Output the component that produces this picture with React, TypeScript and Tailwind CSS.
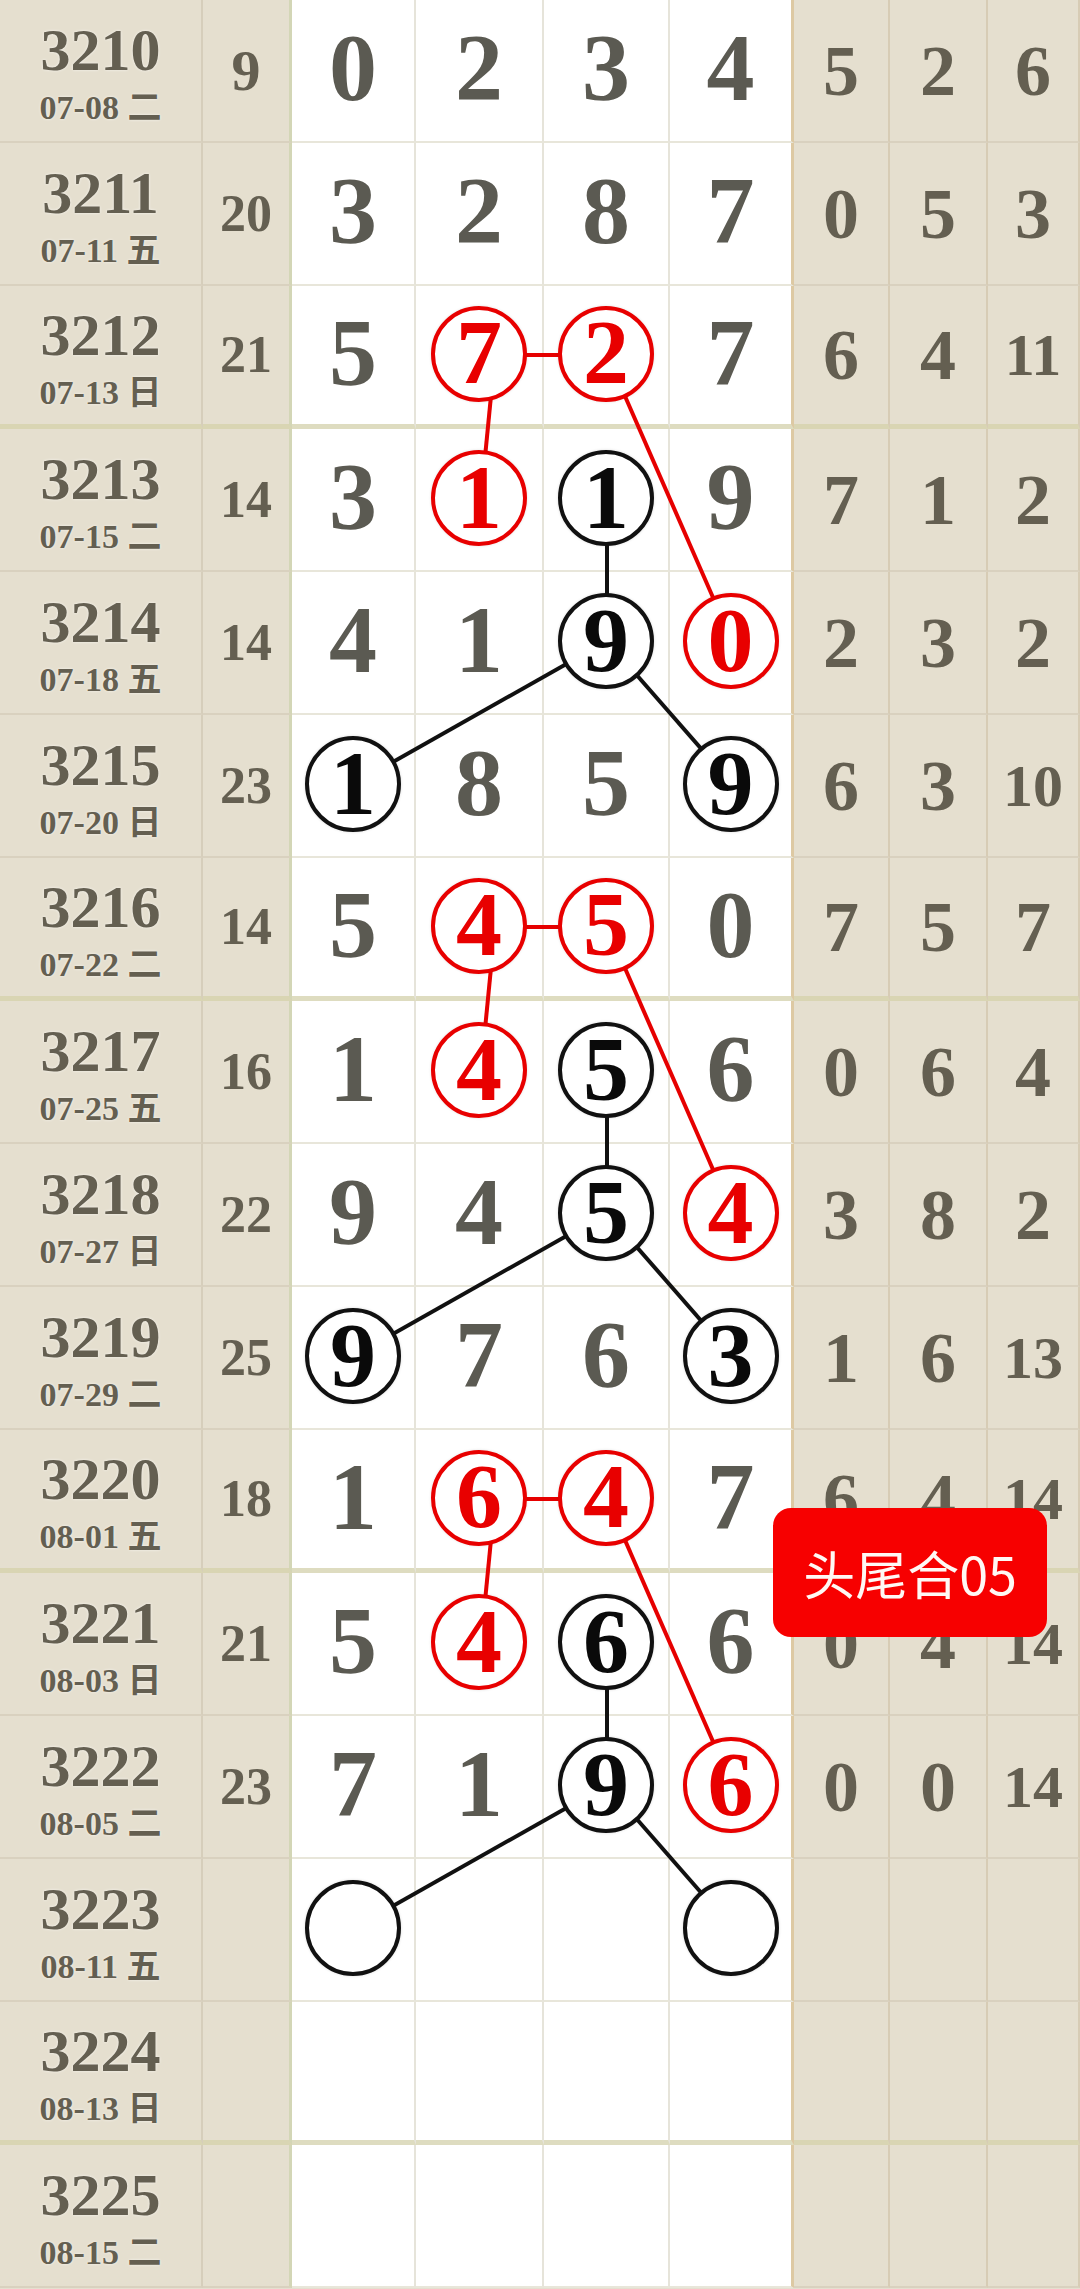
import React from "react";

type Row = {
  id: string;
  date: string;
  wd: string;
  b: string;
  d: number[] | null;
  r: string[] | null;
};

const rows: Row[] = [
  { id: "3210", date: "07-08", wd: "二", b: "9", d: [0, 2, 3, 4], r: ["5", "2", "6"] },
  { id: "3211", date: "07-11", wd: "五", b: "20", d: [3, 2, 8, 7], r: ["0", "5", "3"] },
  { id: "3212", date: "07-13", wd: "日", b: "21", d: [5, 7, 2, 7], r: ["6", "4", "11"] },
  { id: "3213", date: "07-15", wd: "二", b: "14", d: [3, 1, 1, 9], r: ["7", "1", "2"] },
  { id: "3214", date: "07-18", wd: "五", b: "14", d: [4, 1, 9, 0], r: ["2", "3", "2"] },
  { id: "3215", date: "07-20", wd: "日", b: "23", d: [1, 8, 5, 9], r: ["6", "3", "10"] },
  { id: "3216", date: "07-22", wd: "二", b: "14", d: [5, 4, 5, 0], r: ["7", "5", "7"] },
  { id: "3217", date: "07-25", wd: "五", b: "16", d: [1, 4, 5, 6], r: ["0", "6", "4"] },
  { id: "3218", date: "07-27", wd: "日", b: "22", d: [9, 4, 5, 4], r: ["3", "8", "2"] },
  { id: "3219", date: "07-29", wd: "二", b: "25", d: [9, 7, 6, 3], r: ["1", "6", "13"] },
  { id: "3220", date: "08-01", wd: "五", b: "18", d: [1, 6, 4, 7], r: ["6", "4", "14"] },
  { id: "3221", date: "08-03", wd: "日", b: "21", d: [5, 4, 6, 6], r: ["0", "4", "14"] },
  { id: "3222", date: "08-05", wd: "二", b: "23", d: [7, 1, 9, 6], r: ["0", "0", "14"] },
  { id: "3223", date: "08-11", wd: "五", b: "", d: null, r: null },
  { id: "3224", date: "08-13", wd: "日", b: "", d: null, r: null },
  { id: "3225", date: "08-15", wd: "二", b: "", d: null, r: null },
];

const ROW_H = 143;
const colCenters = [354, 480, 607, 732];

const marks: Record<string, "red" | "black"> = {};
const redLines: [number, number, number, number][] = [];
const blackLines: [number, number, number, number][] = [];

const cy = (r: number) => r * ROW_H + 69;

[2, 6, 10].forEach((k) => {
  marks[`${k}-1`] = "red";
  marks[`${k}-2`] = "red";
  marks[`${k + 1}-1`] = "red";
  marks[`${k + 2}-3`] = "red";
  marks[`${k + 1}-2`] = "black";
  marks[`${k + 2}-2`] = "black";
  marks[`${k + 3}-0`] = "black";
  marks[`${k + 3}-3`] = "black";
  redLines.push([colCenters[1], cy(k), colCenters[2], cy(k)]);
  redLines.push([colCenters[1] + 15, cy(k), colCenters[1] + 1, cy(k + 1)]);
  redLines.push([colCenters[2], cy(k), colCenters[3], cy(k + 2)]);
  blackLines.push([colCenters[2], cy(k + 1), colCenters[2], cy(k + 2)]);
  blackLines.push([colCenters[2], cy(k + 2), colCenters[0], cy(k + 3)]);
  blackLines.push([colCenters[2], cy(k + 2), colCenters[3], cy(k + 3)]);
});

const thick = (i: number) => i === 2 || i === 6 || i === 10 || i === 14;

const serif = "font-['Liberation_Serif','Noto_Sans_CJK_SC',serif] font-bold";

function Circle({ color, value }: { color: "red" | "black"; value?: number }) {
  if (color === "red") {
    return (
      <div className="relative z-10 mb-[3px] flex h-[96px] w-[96px] items-center justify-center rounded-full border-4 border-[#e80000] bg-white text-[92px] leading-none text-[#e80000] shadow-[0_0_3px_rgba(0,0,0,0.12)]">
        <span className="pb-[3px]">{value}</span>
      </div>
    );
  }
  return (
    <div className="relative z-10 mb-[3px] flex h-[96px] w-[96px] items-center justify-center rounded-full border-4 border-[#111111] bg-white text-[92px] leading-none text-[#0a0a0a] shadow-[0_0_3px_rgba(0,0,0,0.15)]">
      <span className="pb-[3px]">{value}</span>
    </div>
  );
}

const digitWidths = ["w-[124px]", "w-[128px]", "w-[126px]", "w-[124px]"];
const rightWidths = ["w-[96px]", "w-[98px]", "w-[92px]"];

export default function App() {
  return (
    <div className={`relative h-[2289px] w-[1080px] overflow-hidden bg-[#e5dfcf] ${serif}`}>
      {rows.map((row, i) => {
        const bBeige = thick(i) ? "border-b-[5px] border-b-[#d9d5b3]" : "border-b-2 border-b-[#d9d1bf]";
        const bWhite = thick(i) ? "border-b-[5px] border-b-[#dedcc0]" : "border-b-2 border-b-[#e8e6da]";
        return (
          <div key={row.id} className="flex h-[143px] w-[1080px]">
            <div
              className={`flex h-full w-[203px] flex-col items-center justify-center gap-2 border-r-2 border-r-[#d6cebb] bg-[#e5dfcf] pt-[4px] text-[#645f51] [text-shadow:0_0_3px_rgba(255,255,255,0.7)] ${bBeige}`}
            >
              <div className="text-[60px] leading-[60px]">{row.id}</div>
              <div className="text-[34px] leading-[34px]">
                {row.date} <span className="font-['Noto_Sans_CJK_SC',sans-serif] font-bold">{row.wd}</span>
              </div>
            </div>
            <div
              className={`flex h-full w-[89px] items-center justify-center border-r-[3px] border-r-[#d3d6b6] bg-[#e5dfcf] text-[#645f51] ${bBeige}`}
            >
              {row.b.length === 1 ? (
                <span className="text-[58px] leading-none">{row.b}</span>
              ) : (
                <span className="text-[52px] leading-none">{row.b}</span>
              )}
            </div>
            {digitWidths.map((w, c) => {
              const mark = marks[`${i}-${c}`];
              const val = row.d ? row.d[c] : undefined;
              const last = c === 3;
              return (
                <div
                  key={c}
                  className={`flex h-full items-center justify-center bg-white ${w} ${
                    last ? "border-r-[3px] border-r-[#ddc9a3]" : "border-r-2 border-r-[#e6e4da]"
                  } ${bWhite}`}
                >
                  {mark ? (
                    <Circle color={mark} value={val} />
                  ) : val !== undefined ? (
                    <span className="pb-[5px] text-[96px] leading-none text-[#5b5a52]">{val}</span>
                  ) : null}
                </div>
              );
            })}
            {rightWidths.map((w, c) => {
              const v = row.r ? row.r[c] : "";
              return (
                <div
                  key={c}
                  className={`flex h-full items-center justify-center bg-[#e5dfcf] text-[#645f51] ${w} border-r-2 border-r-[#d7ccb5] ${bBeige}`}
                >
                  {v.length === 1 ? (
                    <span className="text-[72px] leading-none">{v}</span>
                  ) : v.length === 2 ? (
                    <span className="text-[60px] leading-none">{v}</span>
                  ) : null}
                </div>
              );
            })}
          </div>
        );
      })}

      <svg className="pointer-events-none absolute left-0 top-0" width={1080} height={2289}>
        {redLines.map((l, idx) => (
          <line key={`r${idx}`} x1={l[0]} y1={l[1]} x2={l[2]} y2={l[3]} stroke="#e60000" strokeWidth={4} />
        ))}
        {blackLines.map((l, idx) => (
          <line key={`b${idx}`} x1={l[0]} y1={l[1]} x2={l[2]} y2={l[3]} stroke="#111111" strokeWidth={4} />
        ))}
      </svg>

      <div className="absolute left-[773px] top-[1508px] z-20 flex h-[129px] w-[274px] items-center justify-center rounded-[18px] bg-[#f70000] font-['Noto_Sans_CJK_SC',sans-serif] text-[52px] font-normal leading-none text-[#fff8f4]">
        头尾合05
      </div>
    </div>
  );
}
